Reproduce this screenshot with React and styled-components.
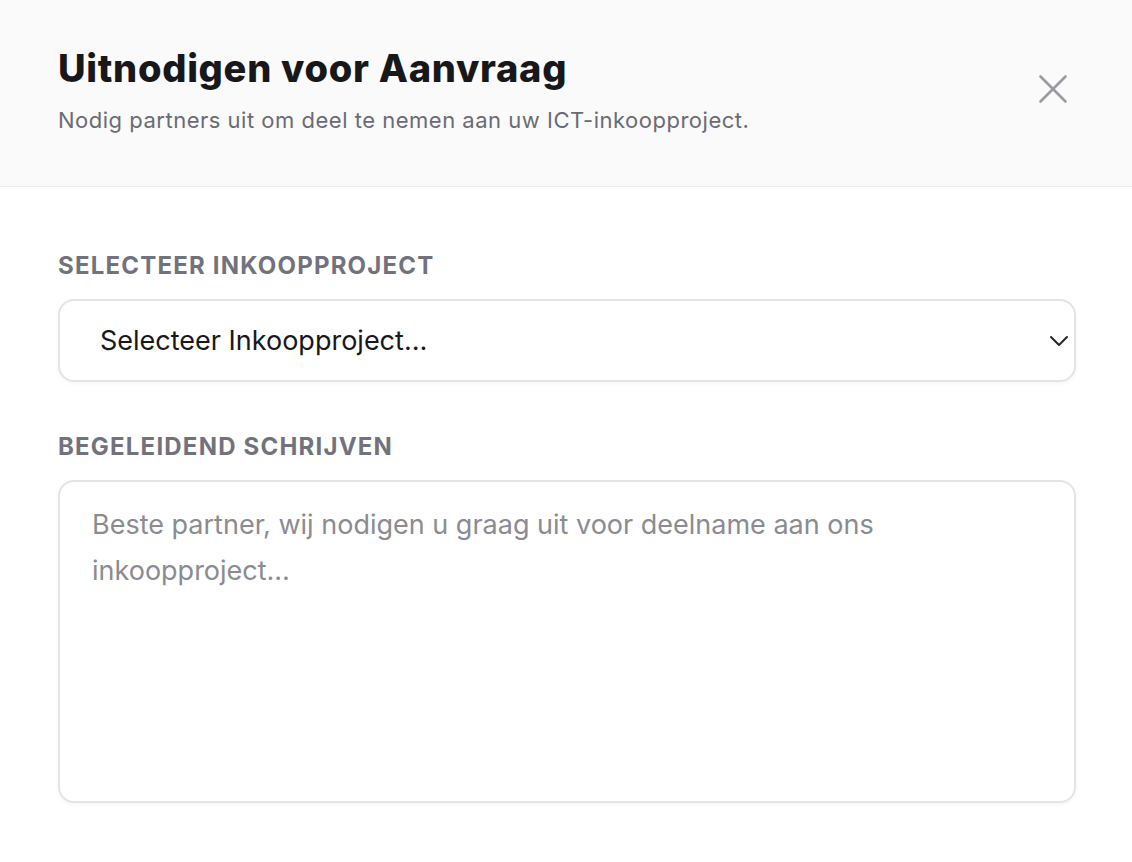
import React from "react";
import styled, { createGlobalStyle } from "styled-components";

const Global = createGlobalStyle`
  html, body { margin: 0; padding: 0; background: #ffffff; }
  body { font-family: Inter, "Noto Sans", "Liberation Sans", sans-serif; -webkit-font-smoothing: antialiased; }
  * { box-sizing: border-box; }
`;

const Dialog = styled.div`
  width: 1132px;
  min-height: 862px;
  background: #ffffff;
  display: flex;
  flex-direction: column;
`;

const Header = styled.header`
  background: #fafafa;
  border-bottom: 1px solid #ededef;
  padding: 44px 56px 0 58px;
  height: 187px;
  display: flex;
  justify-content: space-between;
  align-items: flex-start;
`;

const HeadText = styled.div`
  display: flex;
  flex-direction: column;
  gap: 13px;
`;

const Title = styled.h2`
  margin: 0;
  font-size: 38px;
  line-height: 48px;
  font-weight: 800;
  letter-spacing: 0.019em;
  color: #18181b;
`;

const Subtitle = styled.p`
  margin: 0;
  font-size: 22px;
  line-height: 30px;
  letter-spacing: 0.023em;
  color: #6b6b76;
`;

const CloseButton = styled.button`
  border: none;
  background: none;
  padding: 0;
  margin: 30px 8px 0 0;
  width: 30px;
  height: 30px;
  display: flex;
  align-items: center;
  justify-content: center;
  color: #9a9aa3;
  cursor: pointer;
`;

const Body = styled.div`
  padding: 65px 56px 0 58px;
  display: flex;
  flex-direction: column;
  gap: 51px;
`;

const Field = styled.div`
  display: flex;
  flex-direction: column;
  gap: 19px;
`;

const Label = styled.label`
  font-size: 24px;
  line-height: 28px;
  font-weight: 700;
  letter-spacing: 0.05em;
  text-transform: uppercase;
  color: #72727d;
`;

const SelectBox = styled.div`
  height: 83px;
  border: 2px solid #e4e4e7;
  border-radius: 16px;
  background: #ffffff;
  box-shadow: 0 2px 4px rgba(0, 0, 0, 0.04);
  display: flex;
  align-items: center;
  justify-content: space-between;
  padding: 0 5px 0 40px;
  font-size: 27px;
  color: #18181b;
`;

const Chevron = styled.span`
  display: flex;
  align-items: center;
  color: #27272a;
`;

const TextArea = styled.div`
  height: 323px;
  border: 2px solid #e4e4e7;
  border-radius: 16px;
  background: #ffffff;
  box-shadow: 0 2px 4px rgba(0, 0, 0, 0.04);
  padding: 20px 32px;
  font-size: 27px;
  line-height: 46px;
  color: #8b8b92;
`;

export default function App() {
  return (
    <>
      <Global />
      <Dialog>
        <Header>
          <HeadText>
            <Title>Uitnodigen voor Aanvraag</Title>
            <Subtitle>Nodig partners uit om deel te nemen aan uw ICT-inkoopproject.</Subtitle>
          </HeadText>
          <CloseButton aria-label="Sluiten">
            <svg width="30" height="30" viewBox="0 0 30 30" fill="none" stroke="currentColor" strokeWidth="2.6" strokeLinecap="round">
              <path d="M2.5 2.5 27.5 27.5" />
              <path d="M27.5 2.5 2.5 27.5" />
            </svg>
          </CloseButton>
        </Header>
        <Body>
          <Field>
            <Label>Selecteer Inkoopproject</Label>
            <SelectBox>
              <span>Selecteer Inkoopproject…</span>
              <Chevron>
                <svg width="20" height="12" viewBox="0 0 20 12" fill="none" stroke="currentColor" strokeWidth="2" strokeLinecap="round" strokeLinejoin="round">
                  <path d="M2 2l8 8 8-8" />
                </svg>
              </Chevron>
            </SelectBox>
          </Field>
          <Field>
            <Label>Begeleidend schrijven</Label>
            <TextArea>Beste partner, wij nodigen u graag uit voor deelname aan ons inkoopproject…</TextArea>
          </Field>
        </Body>
      </Dialog>
    </>
  );
}
